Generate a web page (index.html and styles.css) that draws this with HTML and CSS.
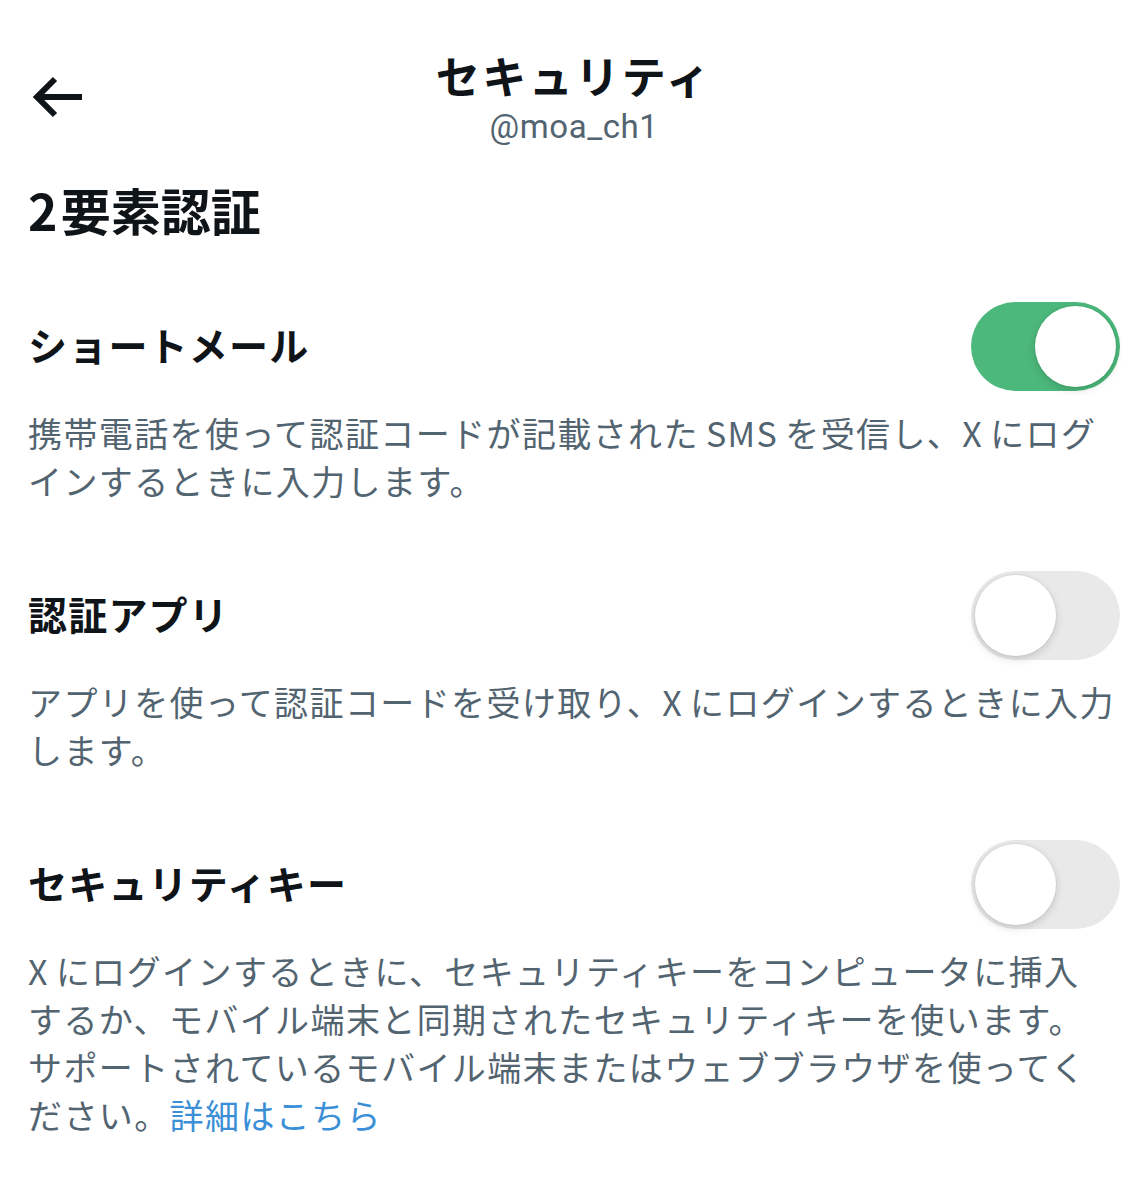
FILE: index.html
```html
<!DOCTYPE html>
<html lang="ja">
<head>
    <meta charset="UTF-8">
    <meta name="viewport" content="width=device-width, initial-scale=1.0">
    <title>セキュリティ</title>
    <link rel="stylesheet" href="styles.css">
</head>
<body>
    <div id="page">
        <div id="header">
            <button class="back-button" aria-label="戻る">
                <svg viewBox="0 0 24 24" width="72" height="72">
                    <path d="M20 11H7.414l4.293-4.293-1.414-1.414L3.586 12l6.707 6.707 1.414-1.414L7.414 13H20v-2z"></path>
                </svg>
            </button>
            <div class="header-titles">
                <div class="header-title">セキュリティ</div>
                <div class="header-handle">@moa_ch1</div>
            </div>
        </div>

        <h2 class="section-title">2 要素認証</h2>

        <div class="setting">
            <div class="setting-head">
                <span class="setting-name">ショートメール</span>
                <span class="toggle on"><span class="knob"></span></span>
            </div>
            <p class="setting-desc">携帯電話を使って認証コードが記載された SMS を受信し、X にログインするときに入力します。</p>
        </div>

        <div class="setting">
            <div class="setting-head">
                <span class="setting-name">認証アプリ</span>
                <span class="toggle"><span class="knob"></span></span>
            </div>
            <p class="setting-desc">アプリを使って認証コードを受け取り、X にログインするときに入力します。</p>
        </div>

        <div class="setting">
            <div class="setting-head">
                <span class="setting-name">セキュリティキー</span>
                <span class="toggle"><span class="knob"></span></span>
            </div>
            <p class="setting-desc">X にログインするときに、セキュリティキーをコンピュータに挿入<span class="nowrap">するか、</span>モバイル端末と同期されたセキュリティキーを使います。<span class="nowrap">サポート</span>されているモバイル端末またはウェブブラウザを使ってください。<a href="#">詳細はこちら</a></p>
        </div>
    </div>
</body>
</html>
```

FILE: styles.css
```css
body {
    margin: 0;
    padding: 0;
    background-color: #fff;
    color: #0f1419;
    font-family: "Noto Sans CJK JP", "Noto Sans", sans-serif;
}

#page {
    padding: 49px 27px 0 28px;
}

#header {
    position: relative;
    display: flex;
    justify-content: center;
}

.back-button {
    position: absolute;
    left: -6px;
    top: 12px;
    border: none;
    background: none;
    padding: 0;
    cursor: pointer;
}

.back-button svg {
    display: block;
    fill: #0f1419;
}

.header-titles {
    display: flex;
    flex-direction: column;
    align-items: center;
}

.header-title {
    font-size: 44px;
    font-weight: 700;
    line-height: 52px;
    letter-spacing: 2.5px;
}

.header-handle {
    font-family: "Roboto", "Noto Sans", sans-serif;
    font-size: 33px;
    line-height: 46px;
    letter-spacing: 0.6px;
    color: #536471;
    margin-top: 3px;
}

.section-title {
    margin: 28px 0 0;
    font-size: 50px;
    font-weight: 700;
    line-height: 62px;
    word-spacing: -8px;
}

.setting {
    margin-top: 62px;
}

.setting + .setting {
    margin-top: 66px;
}

.setting-head {
    display: flex;
    align-items: center;
    justify-content: space-between;
}

.setting-name {
    font-size: 39px;
    font-weight: 700;
    line-height: 50px;
    letter-spacing: 1.2px;
    margin-top: -6px;
}

.toggle {
    display: flex;
    align-items: center;
    width: 149px;
    height: 89px;
    box-sizing: border-box;
    padding: 0 4px;
    border-radius: 45px;
    background-color: #e9e9ea;
}

.toggle.on {
    justify-content: flex-end;
    background-color: #4cb87b;
}

.knob {
    width: 81px;
    height: 81px;
    border-radius: 50%;
    background-color: #fff;
    box-shadow: 0 3px 8px rgba(0, 0, 0, 0.15), 0 0 0 1px rgba(0, 0, 0, 0.04);
}

.setting-desc {
    margin: 18px 0 0;
    font-size: 34px;
    line-height: 48px;
    letter-spacing: 1.4px;
    word-spacing: -2px;
    color: #536471;
}

.setting-desc .nowrap {
    white-space: nowrap;
}

.setting-desc a {
    color: #3a8fd6;
    text-decoration: none;
}
```
